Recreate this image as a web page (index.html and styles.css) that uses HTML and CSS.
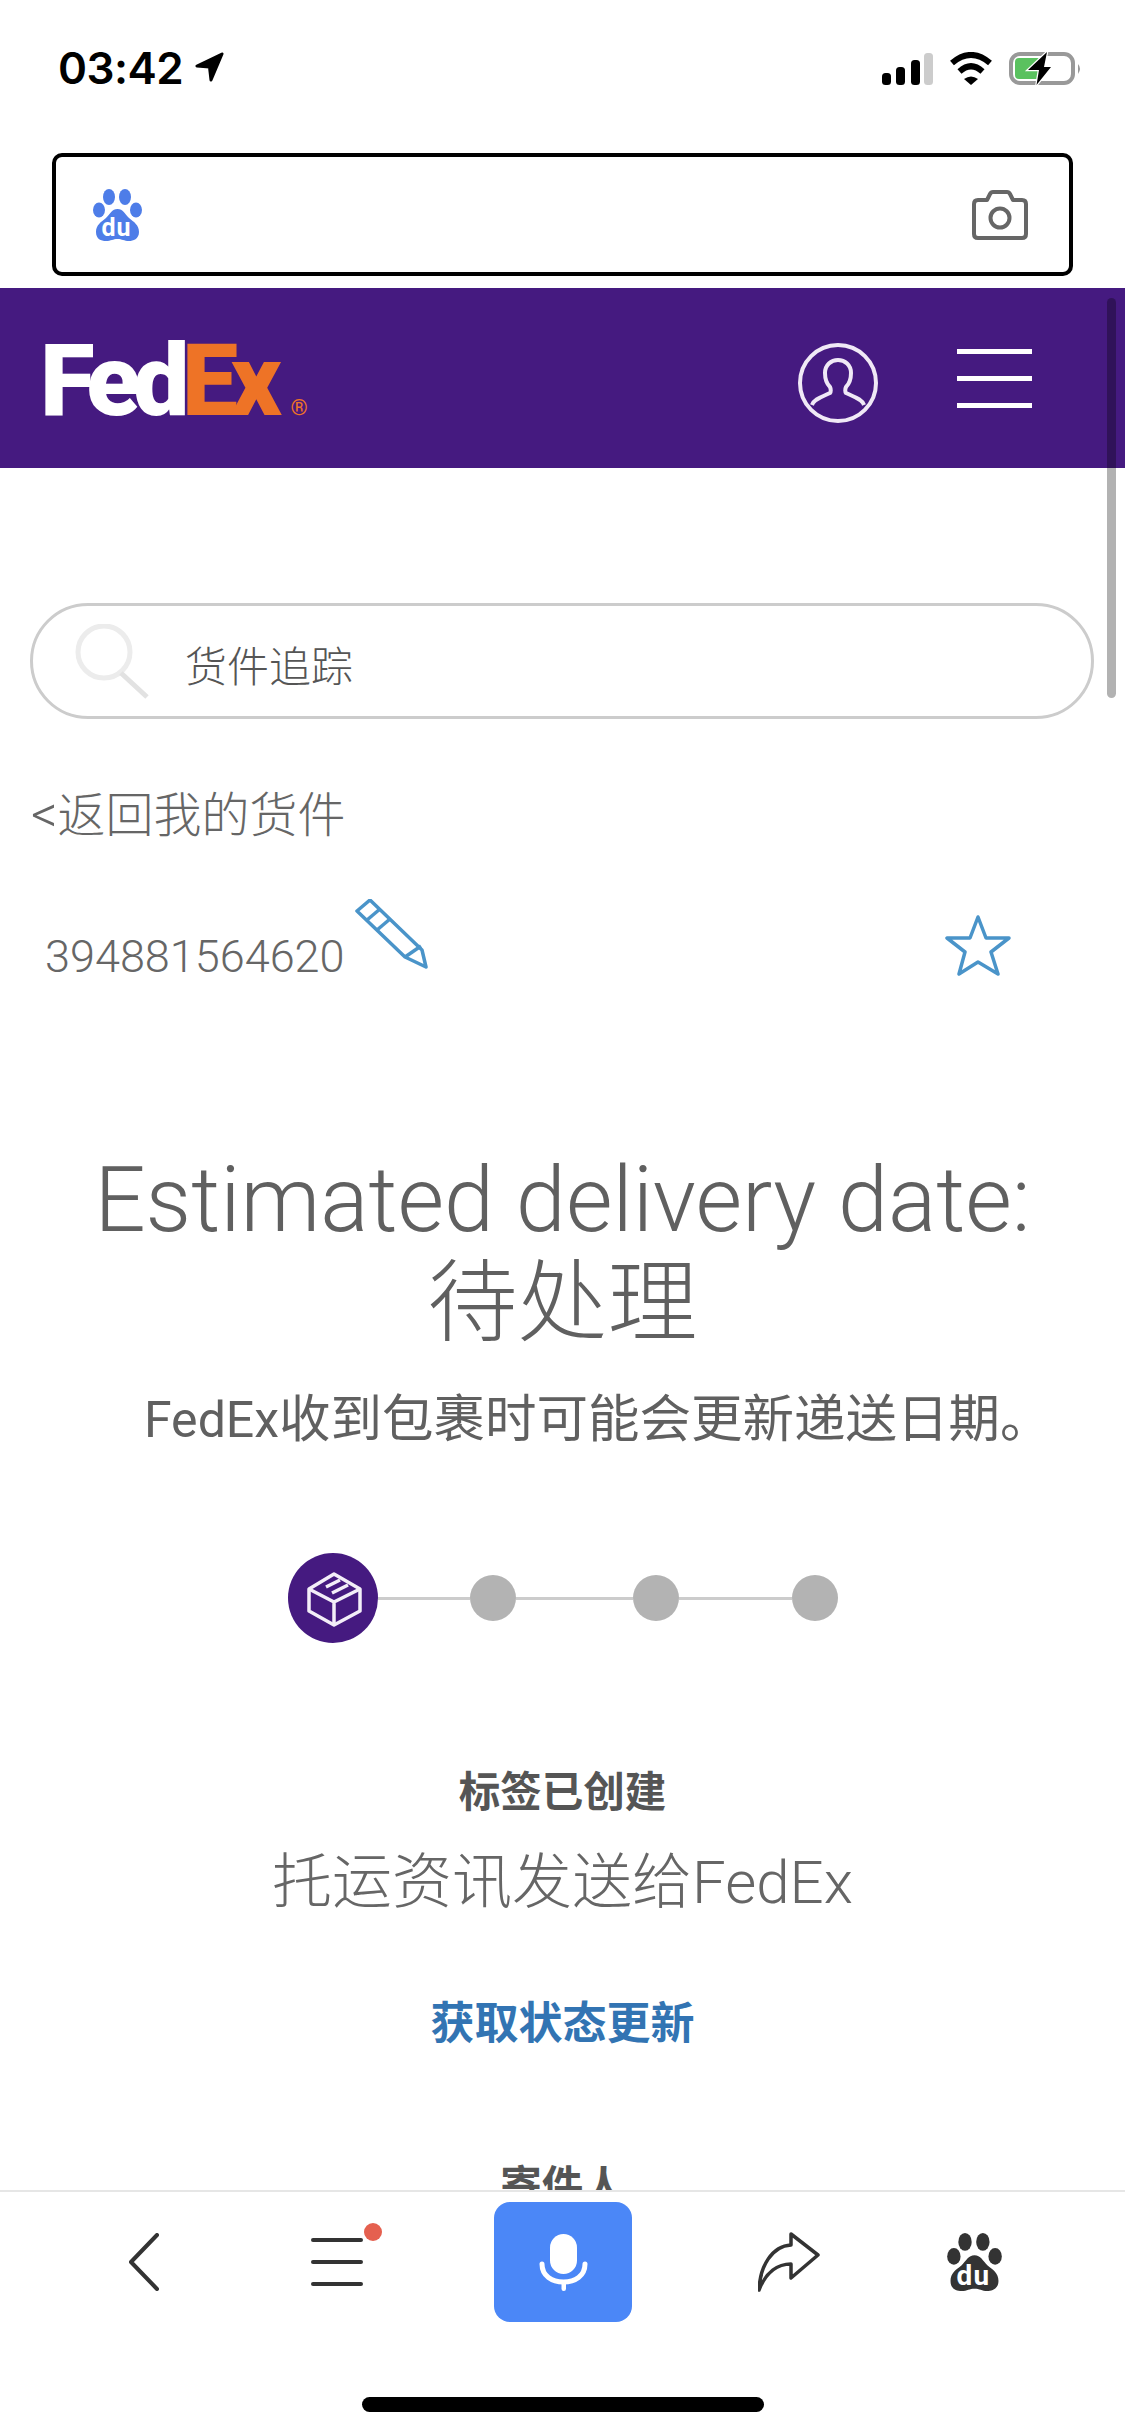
FILE: index.html
```html
<!DOCTYPE html>
<html lang="zh">
<head>
<meta charset="utf-8">
<title>FedEx</title>
<link rel="stylesheet" href="styles.css">
</head>
<body>
<div class="phone">
  <div class="status">
    <div class="status-left">
      <span class="time">03:42</span>
      <svg class="loc" width="29" height="30" viewBox="0 0 29 30"><path d="M27 2 L2 14 L14.5 15 L16 28 Z" fill="#000" stroke="#000" stroke-width="3" stroke-linejoin="round"/></svg>
    </div>
    <div class="status-right">
      <svg width="51" height="33" viewBox="0 0 51 33"><rect x="0" y="21" width="9" height="12" rx="3.5" fill="#000"/><rect x="14" y="15" width="9" height="18" rx="3.5" fill="#000"/><rect x="29" y="8" width="9" height="25" rx="3.5" fill="#000"/><rect x="42" y="1" width="9" height="32" rx="3.5" fill="#ccc"/></svg>
      <svg width="44" height="33" viewBox="0 0 44 33"><path d="M3 11 Q22 -5 41 11" fill="none" stroke="#000" stroke-width="6"/><path d="M10.5 19.5 Q22 9 33.5 19.5" fill="none" stroke="#000" stroke-width="6"/><path d="M15 27 Q22 22 29 27 L22 33 Z" fill="#000"/></svg>
      <svg width="73" height="33" viewBox="0 0 73 33"><rect x="2" y="2" width="62" height="29" rx="9" fill="none" stroke="#999" stroke-width="4"/><rect x="6" y="6" width="26" height="21" rx="4" fill="#5ac15f"/><path d="M69 12 Q73 16.500 69 22 Z" fill="#999"/><path d="M38 0 L19 18 L30 18 L27.500 33 L42 15 L35 15 Z" fill="#000" stroke="#fff" stroke-width="2.500" paint-order="stroke"/></svg>
    </div>
  </div>

  <div class="address">
    <svg class="paw" width="49" height="52" viewBox="0 0 49 52"><g fill="#4e7de8"><ellipse cx="16" cy="8" rx="6" ry="8"/><ellipse cx="32" cy="8" rx="6" ry="8"/><ellipse cx="6" cy="21" rx="6" ry="7.500"/><ellipse cx="43" cy="21" rx="6" ry="7.500"/><path d="M24.500 20 C30 20 32 25 36 29 C41 33 46 36 46 43 C46 50 40 52 36 52 C31 52 29 50 24.500 50 C20 50 18 52 13 52 C8 52 3 50 3 43 C3 36 8 33 13 29 C17 25 19 20 24.500 20Z"/></g><text class="du" x="23.500" y="47" text-anchor="middle" font-size="25" letter-spacing="1" fill="#fff">du</text></svg>
    <svg width="56" height="50" viewBox="0 0 56 50"><path d="M8 10 H15 L18 4 Q19 2 21 2 H35 Q37 2 38 4 L41 10 H50 Q54 10 54 14 V44 Q54 48 50 48 H6 Q2 48 2 44 V14 Q2 10 6 10Z" fill="none" stroke="#666" stroke-width="4" stroke-linejoin="round"/><circle cx="28" cy="28" r="9.500" fill="none" stroke="#666" stroke-width="4"/></svg>
  </div>

  <div class="web">
    <header class="fx-header">
      <div class="logo"><span class="fed">Fed</span><span class="ex">Ex</span><span class="reg">®</span></div>
      <svg class="user" width="80" height="80" viewBox="0 0 80 80"><circle cx="40" cy="40" r="38" fill="none" stroke="#f0e9f6" stroke-width="4"/><path d="M14 62 C16 56 24 54 32 50 C33 49 33 46 32 44 C28 40 27 34 27 30 C27 22 33 17 40 17 C47 17 53 22 53 30 C53 34 52 40 48 44 C47 46 47 49 48 50 C56 54 64 56 66 62" fill="none" stroke="#f0e9f6" stroke-width="4"/></svg>
      <div class="burger"><span></span><span></span><span></span></div>
    </header>

    <div class="search">
      <svg width="74" height="75" viewBox="0 0 74 75"><circle cx="29" cy="28" r="26" fill="none" stroke="#ececec" stroke-width="5"/><path d="M46 49 L72 73" stroke="#e2e2e2" stroke-width="5"/></svg>
      <span class="search-text">货件追踪</span>
    </div>

    <div class="back"><span class="lt">&lt;</span>返回我的货件</div>

    <div class="track">
      <span class="track-no">394881564620</span>
      <svg class="pencil" width="73" height="70" viewBox="0 0 73 70"><g fill="none" stroke="#4a94c9" stroke-width="3.500" stroke-linejoin="round"><path d="M2 12 L15 1 L67 51 L71 68 L50 58 Z"/><path d="M12 21 L25 10"/><path d="M22 31 L35 20"/><path d="M50 58 L66 47"/></g></svg>
      <svg class="star" width="66" height="62" viewBox="0 0 66 62"><path d="M33 3 L41 24 L64 24 L46 38 L53 60 L33 48 L14 60 L20 38 L2 24 L25 24 Z" fill="none" stroke="#4a94c9" stroke-width="3.500" stroke-linejoin="round"/></svg>
    </div>

    <h1 class="est">Estimated delivery date:<br>待处理</h1>
    <p class="sub"><span class="sub-brand">FedEx</span><span class="sub-cjk">收到包裹时可能会更新递送日期。</span></p>

    <div class="stepper">
      <svg class="step-main" width="90" height="90" viewBox="0 0 90 90"><circle cx="45" cy="45" r="45" fill="#451a80"/><g fill="none" stroke="#f3eef8" stroke-width="3.500" stroke-linejoin="round"><path d="M46 21 L72 36 V58 L46 72 L21 58 V36 Z"/><path d="M21 36 L46 49 L72 36 M46 49 V72"/><path d="M52 27 L38 34 M60 32 L44 40"/></g></svg>
      <span class="step-line l1"></span>
      <span class="step-dot"></span>
      <span class="step-line l2"></span>
      <span class="step-dot"></span>
      <span class="step-line l3"></span>
      <span class="step-dot"></span>
    </div>

    <div class="label">标签已创建</div>
    <div class="desc">托运资讯发送给FedEx</div>
    <div class="link">获取状态更新</div>
    <div class="label sender">寄件人</div>

    <div class="scrollbar"></div>
  </div>

  <div class="bottom">
    <nav class="nav">
      <svg class="n-back" width="32" height="58" viewBox="0 0 32 58"><path d="M29 2 L3 29 L29 56" fill="none" stroke="#333" stroke-width="4" stroke-linecap="round" stroke-linejoin="round"/></svg>
      <svg class="n-menu" width="71" height="80" viewBox="0 0 71 80"><g fill="#333"><rect x="0" y="16" width="52" height="4" rx="2"/><rect x="0" y="38" width="52" height="4" rx="2"/><rect x="0" y="60" width="52" height="4" rx="2"/></g><circle cx="62" cy="10" r="9" fill="#e5604f"/></svg>
      <div class="mic">
        <svg width="49" height="57" viewBox="0 0 49 57"><rect x="11" y="0" width="27" height="40" rx="13.500" fill="#fff"/><path d="M3 30 C3 42 13 48 24.500 48 C36 48 46 42 46 30" fill="none" stroke="#fff" stroke-width="5" stroke-linecap="round"/><rect x="22.500" y="47" width="4.500" height="10" rx="2.200" fill="#fff"/></svg>
      </div>
      <svg class="n-share" width="62" height="60" viewBox="0 0 62 60"><path d="M33 2 L60 23 L33 46 V32 C20 32 8 40 1 58 C2 34 14 14 33 13 Z" fill="none" stroke="#333" stroke-width="3.500" stroke-linejoin="round"/></svg>
      <svg class="n-baidu" width="55" height="58" viewBox="0 0 49 52"><g fill="#333"><ellipse cx="16" cy="8" rx="6" ry="8"/><ellipse cx="32" cy="8" rx="6" ry="8"/><ellipse cx="6" cy="21" rx="6" ry="7.500"/><ellipse cx="43" cy="21" rx="6" ry="7.500"/><path d="M24.500 20 C30 20 32 25 36 29 C41 33 46 36 46 43 C46 50 40 52 36 52 C31 52 29 50 24.500 50 C20 50 18 52 13 52 C8 52 3 50 3 43 C3 36 8 33 13 29 C17 25 19 20 24.500 20Z"/></g><text class="du" x="23.500" y="47" text-anchor="middle" font-size="25" letter-spacing="1" fill="#fff">du</text></svg>
    </nav>
    <div class="home"></div>
  </div>
</div>
</body>
</html>
```
FILE: styles.css
```css
* { box-sizing: border-box; }
html, body { margin: 0; padding: 0; background: #fff; }
body { font-family: Roboto, "Noto Sans CJK SC", sans-serif; color: #666; }
svg { display: block; flex: none; }

.phone { width: 1125px; height: 2436px; display: flex; flex-direction: column; overflow: hidden; }

/* status bar */
.status { height: 153px; padding: 52px 43px 0 58px; display: flex; justify-content: space-between; align-items: flex-start; }
.status-left { display: flex; align-items: flex-start; gap: 12px; }
.time { font-family: Inter, Roboto, sans-serif; font-weight: 600; font-size: 44px; line-height: 33px; color: #000; letter-spacing: -0.5px; }
.status-right { display: flex; gap: 16px; }
.du { font-family: Roboto, sans-serif; font-weight: 700; }

/* address box */
.address { height: 123px; margin: 0 52px 12px 52px; padding: 0 41px 0 37px; border: 4px solid #000; border-radius: 10px; display: flex; align-items: center; justify-content: space-between; }

/* web view */
.web { position: relative; flex: 1; min-height: 0; overflow: hidden; }
.fx-header { height: 180px; background: #451a80; padding: 0 93px 0 40px; display: flex; align-items: center; }
.logo { margin-top: 32px; font-family: Roboto, sans-serif; font-weight: 900; font-size: 100px; line-height: 100px; letter-spacing: -7.500px; display: flex; align-items: baseline; }
.fed { color: #fff; }
.ex { color: #ee7326; }
.reg { color: #ee7326; font-size: 22px; font-weight: 400; letter-spacing: 0; margin-left: 16px; }
.user { margin-left: auto; margin-top: 10px; }
.burger { margin-left: 79px; display: flex; flex-direction: column; gap: 22px; }
.burger span { display: block; width: 75px; height: 5px; background: #fff; }

.search { margin: 135px 0 0 30px; width: 1064px; height: 116px; border: 3px solid #ccc; border-radius: 58px; display: flex; align-items: center; padding-left: 42px; }
.search-text { margin-left: 36px; font-size: 42px; font-weight: 300; color: #555; line-height: 60px; margin-top: 14px; }

.back { margin: 66px 0 0 31px; font-size: 48px; font-weight: 300; line-height: 60px; color: #666; }
.lt { font-size: 52px; font-weight: 300; }

.track { margin-top: 55px; height: 75px; padding: 0 114px 0 45px; display: flex; align-items: flex-end; }
.track-no { font-size: 45px; font-weight: 300; line-height: 44px; color: #666; margin-bottom: -3px; }
.pencil { margin: 0 0 7px 10px; }
.star { margin-left: auto; }

.est { margin: 173px 0 0; font-size: 90px; line-height: 103px; font-weight: 300; color: #606060; text-align: center; }
.sub { margin: 35px 0 0; height: 60px; padding-left: 144px; line-height: 60px; color: #606060; white-space: nowrap; }
.sub-brand { font-size: 50px; font-weight: 400; }
.sub-cjk { font-size: 51.500px; font-weight: 400; }

.stepper { margin-top: 103px; padding-left: 288px; display: flex; align-items: center; }
.step-main { width: 90px; height: 90px; }
.step-line { display: block; height: 3px; background: #ccc; }
.l1 { width: 92px; }
.l2 { width: 117px; }
.l3 { width: 113px; }
.step-dot { display: block; width: 46px; height: 46px; border-radius: 50%; background: #b3b3b3; }

.label { margin-top: 120px; font-size: 41.500px; line-height: 60px; font-weight: 700; color: #555; text-align: center; }
.desc { margin-top: 20px; font-size: 60px; line-height: 80px; font-weight: 300; color: #666; text-align: center; }
.link { margin-top: 71px; font-size: 44px; line-height: 60px; font-weight: 700; color: #3274b3; text-align: center; }
.sender { margin-top: 103px; }

.scrollbar { position: absolute; top: 10px; right: 9px; width: 9px; height: 400px; border-radius: 5px; background: rgba(0, 0, 0, 0.3); }

/* bottom toolbar */
.bottom { height: 246px; border-top: 2px solid #e6e6e6; background: #fff; }
.nav { height: 130px; padding: 10px 0 0 128px; display: flex; align-items: center; }
.n-back { margin-right: 151px; }
.n-menu { margin-right: 112px; }
.mic { width: 138px; height: 120px; border-radius: 16px; background: #4b87f7; display: flex; align-items: center; justify-content: center; }
.n-share { margin-left: 126px; }
.n-baidu { margin-left: 127px; }
.home { width: 402px; height: 15px; margin: 75px auto 0; border-radius: 8px; background: #000; }
```
